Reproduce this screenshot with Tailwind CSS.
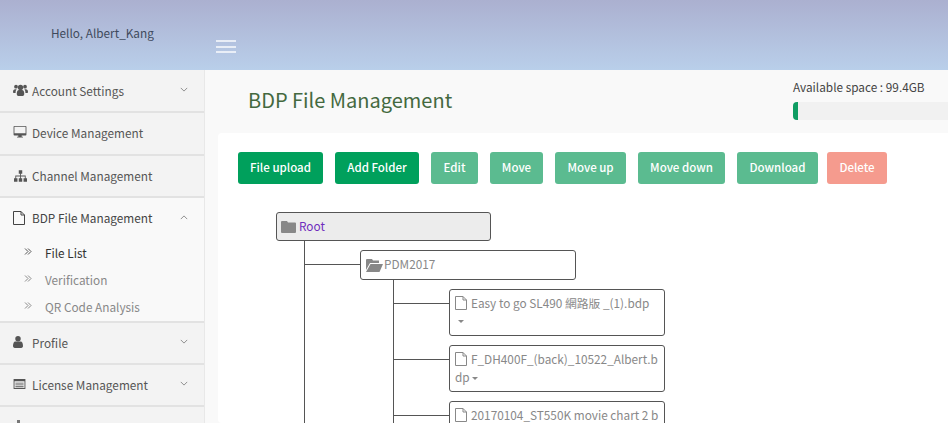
<!DOCTYPE html>
<html lang="en">
<head>
  <meta charset="UTF-8" />
  <title>BDP File Management</title>
  <script src="https://cdn.jsdelivr.net/npm/@tailwindcss/browser@4"></script>
</head>
<body class="h-[423px] overflow-hidden bg-[#f9f9f9] text-[11.8px] text-[#555] font-['Noto_Sans_CJK_TC','Noto_Sans',sans-serif]">

  <!-- Top bar -->
  <header class="h-[70px] flex bg-gradient-to-b from-[#abb0d0] to-[#b9cfea]">
    <div class="w-[205px] pl-[51px] pt-[23px] leading-[20px] text-[#3f4a5c]">Hello, Albert_Kang</div>
    <div class="pl-[11px] pt-[40px]">
      <div class="w-[20px] h-[13px] border-y-2 border-white/70 relative"><div class="absolute top-[3.500px] w-full h-[2px] bg-white/70"></div></div>
    </div>
  </header>

  <div class="flex">
    <!-- Sidebar -->
    <aside class="w-[205px] h-[353px] shrink-0 bg-[#f3f3f3] border-r border-[#e8e8e8]">
      <div class="h-[43px] border-b-2 border-[#e2e2e2] flex items-center pl-[13px] pr-[16px]">
        <svg class="w-[15px] h-[14px] mr-[4px] -mt-[2px] fill-[#555]" viewBox="0 0 20 16"><circle cx="4" cy="3.500" r="2.500"/><circle cx="16" cy="3.500" r="2.500"/><circle cx="10" cy="4.500" r="3.500"/><path d="M0 11c0-3 1-4 3-4h2c-.8 1-1.500 2-1.500 3.500V12H1c-.6 0-1-.4-1-1zM20 11c0-3-1-4-3-4h-2c.8 1 1.500 2 1.500 3.500V12H19c.6 0 1-.4 1-1zM5 13c0-3 1-5 3-5h4c2 0 3 2 3 5 0 2-1 3-2 3H7c-1 0-2-1-2-3z"/></svg>
        <span>Account Settings</span>
        <svg class="ml-auto w-[8px] h-[5px] -mt-[3px] stroke-[#777] fill-none" viewBox="0 0 10 6"><path d="M1 1l4 4 4-4"/></svg>
      </div>
      <div class="h-[43px] border-b-2 border-[#e2e2e2] flex items-center pl-[13px] pb-[2px]">
        <svg class="w-[14px] h-[12px] mr-[5px] -mt-[2px] fill-[#555]" viewBox="0 0 15 14"><path fill-rule="evenodd" d="M1 0h13a1 1 0 0 1 1 1v9a1 1 0 0 1-1 1H9.500v1.500H11V13.500H4V12.500h1.500V11H1a1 1 0 0 1-1-1V1a1 1 0 0 1 1-1zM1 1v7.500h13V1z"/></svg>
        <span>Device Management</span>
      </div>
      <div class="h-[42px] border-b-2 border-[#e2e2e2] flex items-center pl-[13px]">
        <svg class="w-[13px] h-[12px] ml-[1px] mr-[5px] fill-[#555]" viewBox="0 0 15 13"><path d="M5.500 0h4v4H8v2h5.500v3H15v4h-4V9h1.500V7H8v2h1.500v4h-4V9H7V7H2.500v2H4v4H0V9h1.500V6H7V4H5.500z"/></svg>
        <span>Channel Management</span>
      </div>
      <div class="h-[125px] bg-[#f9f9f9] border-b-2 border-[#e2e2e2]">
        <div class="h-[40px] flex items-center pl-[13px] pr-[16px] text-[#444]">
          <svg class="w-[12px] h-[14px] mr-[7px] -mt-[1px] fill-none stroke-[#444]" viewBox="0 0 12 14"><path d="M.5.500h7.500l3.500 3.500v9.500H.5zM8 .5V4h3.500"/></svg>
          <span>BDP File Management</span>
          <svg class="ml-auto w-[8px] h-[5px] -mt-[2px] stroke-[#777] fill-none" viewBox="0 0 10 6"><path d="M1 5l4-4 4 4"/></svg>
        </div>
        <ul class="text-[#888] pt-[1px]">
          <li class="h-[27px] flex items-center pl-[24px] text-[#333]">
            <svg class="w-[8px] h-[7px] mr-[13px] -mt-[3px] fill-none stroke-[#555]" viewBox="0 0 8 7"><path d="M1 .5l3 3-3 3M4 .5l3 3-3 3"/></svg>File List
          </li>
          <li class="h-[27px] flex items-center pl-[24px]">
            <svg class="w-[8px] h-[7px] mr-[13px] -mt-[3px] fill-none stroke-[#888]" viewBox="0 0 8 7"><path d="M1 .5l3 3-3 3M4 .5l3 3-3 3"/></svg>Verification
          </li>
          <li class="h-[27px] flex items-center pl-[24px]">
            <svg class="w-[8px] h-[7px] mr-[13px] -mt-[3px] fill-none stroke-[#888]" viewBox="0 0 8 7"><path d="M1 .5l3 3-3 3M4 .5l3 3-3 3"/></svg>QR Code Analysis
          </li>
        </ul>
      </div>
      <div class="h-[42px] border-b-2 border-[#e2e2e2] flex items-center pl-[13px] pr-[16px]">
        <svg class="w-[10px] h-[12px] mr-[9px] -mt-[2px] fill-[#555]" viewBox="0 0 11 13"><circle cx="5.500" cy="3" r="3"/><path d="M0 11c0-3 1-5 2.500-5h6C10 6 11 8 11 11c0 1-.7 2-2 2H2c-1.300 0-2-1-2-2z"/></svg>
        <span>Profile</span>
        <svg class="ml-auto w-[8px] h-[5px] -mt-[3px] stroke-[#777] fill-none" viewBox="0 0 10 6"><path d="M1 1l4 4 4-4"/></svg>
      </div>
      <div class="h-[42px] border-b-2 border-[#e2e2e2] flex items-center pl-[13px] pr-[16px] pb-[1px]">
        <svg class="w-[13px] h-[10px] mr-[6px] -mt-[2px] fill-[#555]" viewBox="0 0 13 11"><path fill-rule="evenodd" d="M0 0h13v11H0zM1 2.500V10h11V2.500zM2 4h9v1H2zM2 6h9v1H2zM2 8h9v1H2z"/></svg>
        <span>License Management</span>
        <svg class="ml-auto w-[8px] h-[5px] -mt-[3px] stroke-[#777] fill-none" viewBox="0 0 10 6"><path d="M1 1l4 4 4-4"/></svg>
      </div>
      <div class="pl-[13px] pt-[13px]">
        <svg class="w-[5px] h-[5px] ml-[3px] fill-[#777]" viewBox="0 0 5 5"><rect x="1" width="3" height="5"/></svg>
      </div>
    </aside>

    <!-- Content -->
    <main class="flex-1 min-w-0 pl-[13px]">
      <div class="h-[63px] flex justify-between">
        <h1 class="pl-[30px] pt-[15px] text-[20px] leading-[30px] text-[#44693f]">BDP File Management</h1>
        <div class="w-[155px] shrink-0 pt-[7px]">
          <div class="leading-[20px] text-[#444]">Available space : 99.4GB</div>
          <div class="mt-[5px] h-[18px] bg-[#f1f1f1] rounded-l-[4px] overflow-hidden"><div class="w-[5px] h-full bg-[#0f9d63]"></div></div>
        </div>
      </div>

      <div class="h-[290px] bg-white rounded-l-[4px] pl-[20px] pt-[19px] overflow-hidden">
        <!-- Toolbar -->
        <div class="flex gap-[12px] font-medium text-white text-[11.500px] [text-shadow:0_0_.5px_#fff]">
          <button class="h-[32px] w-[85px] rounded-[3px] bg-[#00a05c]">File upload</button>
          <button class="h-[32px] w-[84px] rounded-[3px] bg-[#00a05c]">Add Folder</button>
          <button class="h-[32px] w-[47px] rounded-[3px] bg-[#5bbb90]">Edit</button>
          <button class="h-[32px] w-[53px] rounded-[3px] bg-[#5bbb90]">Move</button>
          <button class="h-[32px] w-[71px] rounded-[3px] bg-[#5bbb90]">Move up</button>
          <button class="h-[32px] w-[87px] rounded-[3px] bg-[#5bbb90]">Move down</button>
          <button class="h-[32px] w-[81px] rounded-[3px] bg-[#5bbb90]">Download</button>
          <button class="h-[32px] w-[60px] -ml-[3px] rounded-[3px] bg-[#f59b8e]">Delete</button>
        </div>

        <!-- File tree -->
        <div class="mt-[28px] ml-[38px] text-[#888] leading-[18px]">
          <div class="w-[215px] h-[29px] flex items-center px-[4px] gap-[3px] rounded-[3px] border border-[#555] bg-[#ececec] text-[#6f2dbd]">
            <svg class="w-[15px] h-[13px] fill-[#888]" viewBox="0 0 15 13"><path d="M1 1h5l1 1.500h7a1 1 0 0 1 1 1V12a1 1 0 0 1-1 1H1a1 1 0 0 1-1-1V2a1 1 0 0 1 1-1z"/></svg>
            <span class="-mt-[1px]">Root</span>
          </div>
          <div class="ml-[28px] border-l border-[#555] pt-[9px] pl-[55px] pb-[100px]">
            <div class="relative w-[216px] h-[30px] flex items-center pl-[5px] rounded-[3px] border border-[#555] bg-white">
              <span class="absolute -left-[56px] top-[13px] w-[56px] h-px bg-[#555]"></span>
              <svg class="w-[17px] h-[13px] fill-[#888] shrink-0" viewBox="0 0 17 13"><path d="M1 0h5l1 1.500h6V4H4L0 11V1a1 1 0 0 1 1-1zM4.500 5H17l-3.500 8H0z"/></svg>
              <span class="ml-[1px] -mt-[2px]">PDM2017</span>
            </div>
            <div class="ml-[33px] border-l border-[#555] pt-[9px] pl-[55px] flex flex-col gap-[9px]">
              <div class="relative w-[216px] h-[47px] rounded-[3px] border border-[#555] bg-white pl-[5px] pt-[4px] pr-[2px]">
                <span class="absolute -left-[56px] top-[13px] w-[56px] h-px bg-[#555]"></span>
                <svg class="inline w-[12px] h-[14px] -mt-[4px] mr-[4px] fill-none stroke-[#888]" viewBox="0 0 12 14"><path d="M.5.500h7.500l3.500 3.500v9.500H.5zM8 .5V4h3.500"/></svg>Easy to go SL490 網路版 _(1).bdp
                <span class="block w-0 h-0 mt-[8px] ml-[3px] border-x-[3px] border-x-transparent border-t-[3px] border-t-[#888]"></span>
              </div>
              <div class="relative w-[216px] h-[47px] rounded-[3px] border border-[#555] bg-white pl-[5px] pt-[4px] pr-[2px] break-all">
                <span class="absolute -left-[56px] top-[13px] w-[56px] h-px bg-[#555]"></span>
                <svg class="inline w-[12px] h-[14px] -mt-[4px] mr-[4px] fill-none stroke-[#888]" viewBox="0 0 12 14"><path d="M.5.500h7.500l3.500 3.500v9.500H.5zM8 .5V4h3.500"/></svg>F_DH400F_(back)_10522_Albert.bdp<span class="inline-block w-0 h-0 align-middle ml-[2px] border-x-[3px] border-x-transparent border-t-[3px] border-t-[#888]"></span>
              </div>
              <div class="relative w-[216px] h-[47px] rounded-[3px] border border-[#555] bg-white pl-[5px] pt-[4px] pr-[2px]">
                <span class="absolute -left-[56px] top-[13px] w-[56px] h-px bg-[#555]"></span>
                <svg class="inline w-[12px] h-[14px] -mt-[4px] mr-[4px] fill-none stroke-[#888]" viewBox="0 0 12 14"><path d="M.5.500h7.500l3.500 3.500v9.500H.5zM8 .5V4h3.500"/></svg>20170104_ST550K movie chart 2 b
              </div>
            </div>
          </div>
        </div>
      </div>
    </main>
  </div>
</body>
</html>
